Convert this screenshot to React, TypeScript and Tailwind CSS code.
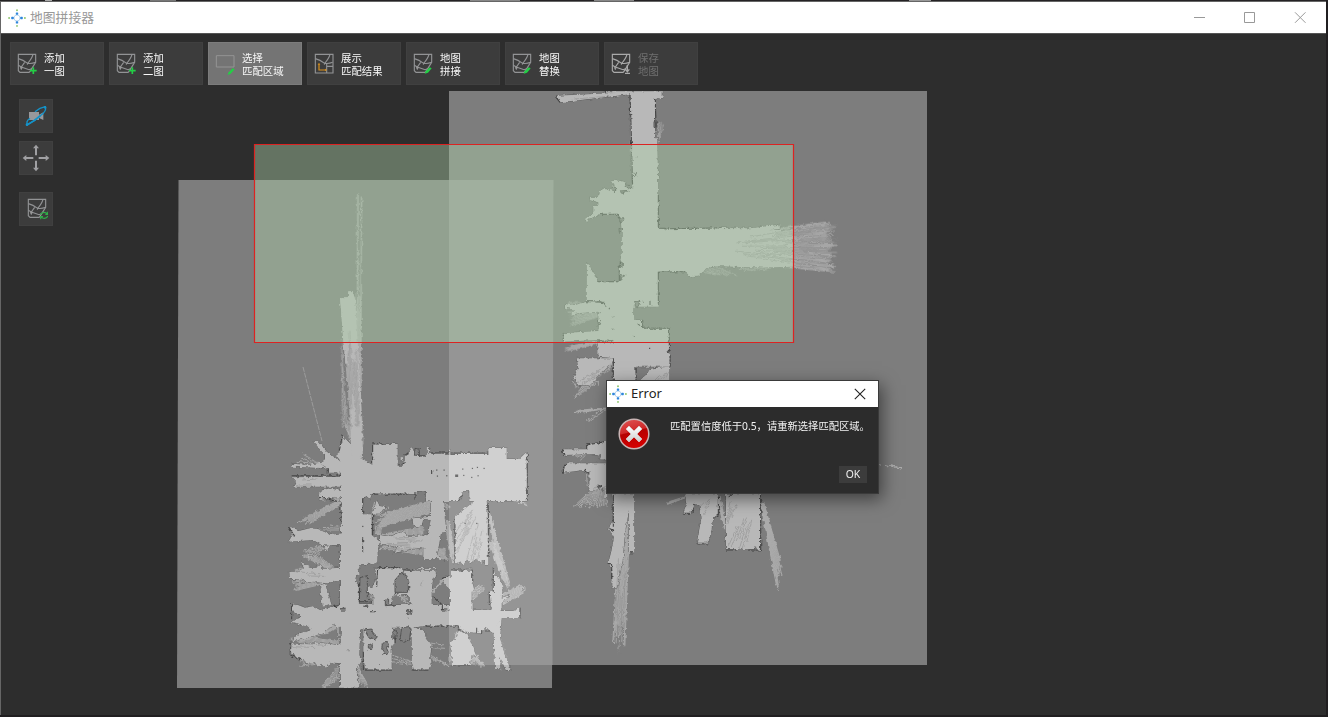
import React from "react";

type Badge = "plus" | "pen" | "save" | "sync" | "axes" | "none";

const uiFont = "font-['Noto_Sans','Noto_Sans_CJK_SC',sans-serif]";

function AppLogo() {
  return (
    <svg className="size-[18px] shrink-0" viewBox="0 0 18 18">
      <circle cx="9" cy="9" r="3" fill="#fff" stroke="#b9d6f0" strokeWidth="1" />
      <g fill="#2f86dc">
        <rect x="7.8" y="3.4" width="2.4" height="2.4" rx=".6" />
        <rect x="7.8" y="12.2" width="2.4" height="2.4" rx=".6" />
        <rect x="3.2" y="7.8" width="2.6" height="2.4" rx=".6" />
        <rect x="12.2" y="7.8" width="2.6" height="2.4" rx=".6" />
      </g>
      <g fill="#8cc56a">
        <circle cx="9" cy="1.2" r=".95" />
        <circle cx="9" cy="16.9" r=".95" />
        <circle cx="1.1" cy="9" r=".95" />
        <circle cx="16.9" cy="9" r=".95" />
      </g>
    </svg>
  );
}

function MapIcon({ badge, disabled }: { badge: Badge; disabled?: boolean }) {
  const full = badge === "axes";
  return (
    <svg className="h-[22px] w-[21px] shrink-0" viewBox="0 0 63 66" fill="none">
      <g stroke={disabled ? "#aaaaaa" : "#929395"} strokeWidth="3.4">
        <path d={full ? "M4 4H57V60H4Z" : "M37 58H9L4 53V4H56V28L37 58"} />
        <path d="M4 17Q18 20 32 31Q44 33 56 28" />
        <path d="M48 4Q45 16 32 31L31 35" />
        {!full && <path d="M4 37L13 42L36 50L44 47M13 42L23 28M13 44V50" />}
        {full && <path d="M38 40H57M38 32V60" />}
      </g>
      {!full && <circle cx="13" cy="44" r="3.5" fill="#999" />}
      {badge === "plus" && <path d="M49 43V63M39 53H59" stroke="#22cf45" strokeWidth="5" />}
      {badge === "pen" && <path d="M35 62L38 54L50 43L56 46L45 59Z" fill="#22cf45" />}
      {badge === "save" && (
        <path d="M49 36V56M43 49L49 56L55 49M42 61H57" stroke="#aaaaaa" strokeWidth="4" />
      )}
      {badge === "sync" && (
        <g stroke="#2fae48" strokeWidth="3.4">
          <path d="M40 50Q47 39 58 45L62 49M62 41V49H55" />
          <path d="M63 54Q55 65 45 59L41 56M41 64V56H48" />
        </g>
      )}
      {full && (
        <>
          <path d="M15 34V51H34" stroke="#d9901c" strokeWidth="3.6" />
          <path d="M11 35L15 29L19 35ZM33 47L39 51L33 55Z" fill="#d9901c" />
        </>
      )}
    </svg>
  );
}

function RegionIcon() {
  return (
    <svg className="h-[22px] w-[21px] shrink-0" viewBox="0 0 63 66" fill="none">
      <path d="M4 8H57V42H4Z" stroke="#949494" strokeWidth="3" />
      <path d="M38 66L41 58L53 46L59 49L47 62Z" fill="#22cf45" />
    </svg>
  );
}

const tools: { lines: [string, string]; badge: Badge; active?: boolean; disabled?: boolean }[] = [
  { lines: ["添加", "一图"], badge: "plus" },
  { lines: ["添加", "二图"], badge: "plus" },
  { lines: ["选择", "匹配区域"], badge: "none", active: true },
  { lines: ["展示", "匹配结果"], badge: "axes" },
  { lines: ["地图", "拼接"], badge: "pen" },
  { lines: ["地图", "替换"], badge: "pen" },
  { lines: ["保存", "地图"], badge: "save", disabled: true },
];

function Toolbar() {
  return (
    <div className="relative flex gap-[5px] pt-2 pl-[9px]">
      {tools.map((t, i) => (
        <button
          key={i}
          className={`flex h-[43px] w-[94px] items-center border pl-[6px] text-left text-[10.4px] leading-[13px] ${
            t.active ? "border-[#7c7c7c] bg-[#747474]" : "border-[#404040] bg-[#3c3c3c]"
          } ${t.disabled ? "text-[#6f6f6f]" : "text-[#f8f8f8]"}`}
        >
          {t.active ? <RegionIcon /> : <MapIcon badge={t.badge} disabled={t.disabled} />}
          <span className="ml-[6px] pt-[3px] whitespace-nowrap">
            {t.lines[0]}
            <br />
            {t.lines[1]}
          </span>
        </button>
      ))}
    </div>
  );
}

function SideTools() {
  const cls = "flex size-[34px] items-center justify-center border border-[#404040] bg-[#3c3c3c]";
  return (
    <div className="relative flex flex-col pt-[14px] pl-[18px]">
      <button className={cls}>
        <svg className="size-[26px]" viewBox="0 0 78 78" fill="none">
          <path d="M18 27H48V35L61 28V51L48 45V51H18Z" fill="#98989b" />
          <path
            d="M36 26Q50 14 67 11Q72 24 52 38Q34 55 12 66V56Q14 50 21 46"
            stroke="#1492c8"
            strokeWidth="4"
          />
          <path d="M52 38Q34 55 12 66" stroke="#1492c8" strokeWidth="5" />
          <circle cx="66" cy="13" r="4" fill="#1492c8" />
          <circle cx="12" cy="65" r="4" fill="#1492c8" />
        </svg>
      </button>
      <button className={`${cls} mt-2`}>
        <svg className="size-[28px]" viewBox="0 0 84 84" fill="none">
          <path d="M42 34V8M42 50V76M34 42H8M50 42H76" stroke="#a0a0a3" strokeWidth="6" />
          <path
            d="M33 13L42 2L51 13ZM33 71L42 82L51 71ZM13 33L2 42L13 51ZM71 33L82 42L71 51Z"
            fill="#a0a0a3"
          />
        </svg>
      </button>
      <button className={`${cls} mt-[17px] pl-[2px]`}>
        <MapIcon badge="sync" />
      </button>
    </div>
  );
}

type Fan = [number, number, number, number, number, number, number, number, number];

/* Rays spreading from segment (a,b)-(c,d) to segment (e,f)-(g,h). */
function fanPath([a, b, c, d, e, f, g, h, n]: Fan): string {
  let out = "";
  for (let i = 0; i < n; i++) {
    const t = n > 1 ? i / (n - 1) : 0.5;
    const r = Math.abs(Math.sin((i + 1) * 12.9898 + e) * 43758.5453) % 1;
    const k = n < 4 ? 1 : 0.78 + 0.22 * r;
    const x0 = a + (c - a) * t;
    const y0 = b + (d - b) * t;
    const x1 = e + (g - e) * t;
    const y1 = f + (h - f) * t;
    out += `M${x0.toFixed(1)} ${y0.toFixed(1)}L${(x0 + (x1 - x0) * k).toFixed(1)} ${(y0 + (y1 - y0) * k).toFixed(1)}`;
  }
  return out;
}

/* Short broken streaks inside the same kind of fan. */
function streakPath([a, b, c, d, e, f, g, h, n]: Fan): string {
  let out = "";
  for (let i = 0; i < n; i++) {
    const t = n > 1 ? i / (n - 1) : 0.5;
    const r = Math.abs(Math.sin((i + 3) * 78.233 + f) * 43758.5453) % 1;
    const x0 = a + (c - a) * t;
    const y0 = b + (d - b) * t;
    const x1 = e + (g - e) * t;
    const y1 = f + (h - f) * t;
    const s = 0.1 + r * 0.45;
    const q = Math.min(1, s + 0.35 + r * 0.3);
    out += `M${(x0 + (x1 - x0) * s).toFixed(1)} ${(y0 + (y1 - y0) * s).toFixed(1)}L${(x0 + (x1 - x0) * q).toFixed(1)} ${(y0 + (y1 - y0) * q).toFixed(1)}`;
  }
  return out;
}

interface Scan {
  x: number;
  y: number;
  free: string[];
  holes?: string[];
  walls?: string;
  rays?: Fan[];
  shade?: Fan[];
}

/* Each scan is stored at three units per map pixel, from its own origin. */
const scans: Scan[] = [
  {
    x: 280,
    y: 420,
    free: [
      "M187 45L200 60L225 92L247 118L278 135V72H353V140H368V122L360 118L372 100L380 108L386 98L396 82L402 95L415 95V108H440V82H447V100H505L510 85L513 102H625V84H680V117H718L738 98H742V130L738 140L742 150V243H620L625 300V410H525V290L560 262L583 243H568V213H545V235L535 243H490L494 290L500 335L483 338L478 370L468 418H430L440 360L452 300L430 296L425 318L410 322L400 315L398 295L453 290V243L438 240V213H410V222H275L270 238L262 230L248 235V283H275V345L300 365L290 400L293 430H183V375H125L100 360L25 365L38 345L30 320L60 332L90 325L120 328L150 345L183 340V200H40L48 185L35 172L183 170V158H145V145L118 130L135 118V95L150 108L183 125L168 105L178 95V80L187 70Z",
      "M98 62L114 62L140 95L183 125L160 120L128 98Z",
      "M35 132L90 134L118 128L140 145L36 140Z",
      "M122 212L150 205L183 212V232L140 236L118 240Z",
      "M275 290L284 262L290 240L296 252L298 258L320 262L306 274Z",
      "M300 345L330 350L372 333L380 348L452 345V380L390 388L340 400L352 382L300 370Z",
      "M128 378L155 375L140 392Z",
    ],
    walls:
      "M35 167H183M183 250V318M248 235V283M275 222H385M120 232L175 245M372 100V130L358 135M385 98L375 106M418 108H440M448 99H625M742 98V243M455 150V162M278 135V72H310M525 290V410M625 250V410M248 355V395M278 285V345M187 45L178 92M25 320L45 350M145 158V145M405 215V240M535 243L548 225",
    holes: ["M405 85L418 88V106H403Z"],
    rays: [
      [183, 238, 183, 252, 45, 308, 78, 318, 9],
      [175, 243, 183, 228, 112, 205, 112, 245, 8],
      [213, 60, 245, 110, 188, 0, 245, 0, 16],
      [118, 130, 130, 135, 60, 98, 36, 136, 4],
      [453, 240, 453, 280, 285, 290, 280, 325, 18],
      [275, 285, 290, 290, 285, 240, 325, 260, 9],
      [430, 320, 430, 405, 295, 345, 300, 385, 26],
      [420, 375, 435, 405, 500, 390, 510, 420, 12],
      [490, 290, 505, 300, 518, 430, 528, 420, 7],
      [626, 270, 634, 300, 650, 440, 698, 520, 10],
      [290, 345, 300, 345, 285, 320, 310, 305, 5],
      [183, 320, 183, 330, 150, 315, 110, 330, 3],
      [125, 375, 140, 380, 65, 395, 90, 420, 6],
      [700, 244, 712, 244, 740, 250, 742, 258, 3],
      [490, 250, 490, 262, 515, 262, 505, 270, 4],
    ],
    shade: [
      [580, 260, 600, 265, 525, 340, 530, 410, 9],
      [595, 290, 618, 300, 560, 420, 590, 430, 6],
      [40, 182, 40, 195, 140, 175, 140, 195, 2],
      [440, 350, 440, 400, 320, 355, 320, 385, 9],
    ],
  },
  {
    x: 280,
    y: 555,
    free: [
      "M180 -12H293V0L290 25L245 28L232 42L240 55L228 62L225 80L238 88V140L278 145V150H510V165H640L665 168H700L720 158L718 190L665 190L650 215L640 235L615 218L600 235L560 230L535 213H435L390 218V255H362V218H335L345 240V265L335 270V345H255L250 290V218L240 225L238 300L245 318L228 345L240 398H180V325L150 322L140 338L125 326L118 335L100 322L75 325L70 312L50 310L42 296L30 300V265L70 268L110 262L175 270V215L160 208L130 235L35 260L50 240L95 225L85 215L62 210L50 205L30 200L60 190V178L35 170L40 145L75 158L98 154L120 165L180 150Z",
      "M28 50L55 52L72 40L62 18L88 38L110 38L118 25L126 42L180 38V75L140 85L100 80L65 85L82 76L40 72L30 72Z",
      "M120 90L136 86L144 118L155 150L128 155Z",
      "M285 38H362L370 48L345 75V112L330 150H280V120L262 110L255 88L278 98L290 70Z",
      "M370 45L395 48L420 38L465 38L468 60L458 80L455 110V150H395L385 120L350 120L362 112L388 112V80Z",
      "M515 45L540 50L575 38V75L582 102L575 110V170H510V105L485 72L500 62L515 70Z",
      "M640 35L646 62L658 68L668 100L665 128L690 120L665 142V170H635L628 110L640 105Z",
      "M395 215L430 225L440 250L455 270L450 305L455 320L445 345H402L395 320Z",
      "M540 215L560 230L575 270L590 306L575 300L570 330H515V285L508 265L530 245Z",
      "M640 225L665 190L660 250L672 290L692 345H677L660 305L660 340H645Z",
      "M430 -20H462L470 0L495 15L465 8H430Z",
      "M525 -12H625V30H615V15H605V28L588 12L570 25L560 12L550 32L540 18L525 28Z",
    ],
    holes: [
      "M252 225L275 222L280 238L292 245L285 254L268 250L262 240Z",
      "M365 218L385 215L392 228L388 255L372 262L360 252Z",
      "M308 262L318 258L326 268L320 280L325 292L312 300L305 280Z",
      "M316 135L326 130L326 145L344 150L316 152Z",
      "M265 270L277 266L275 284L265 282Z",
      "M380 165L396 167L395 178L380 176Z",
      "M340 222L352 232L350 250L338 250Z",
      "M345 75L365 52L385 75V112H345Z",
      "M240 68L262 62V130L278 145H238Z",
    ],
    walls:
      "M295 38H360M370 45H465M485 72L505 60M515 45H575V75M458 125L485 148M435 213H535V225L560 235M180 160H197M250 154H265M180 165L197 165M345 240V265M240 140H278M238 85V140M180 215V265M35 148V190M32 262V300L60 315M640 35V110M720 158V190M270 170H285M605 225V235M615 228H630M250 290V345M255 345H335M395 345H445M180 150L160 157M487 152V165H510M293 38L290 95M628 110V150M590 218V234M203 287H205M298 331H300M383 190H385",
    rays: [
      [175, 40, 175, 76, 28, 40, 40, 108, 22],
      [140, 40, 170, 45, 55, -5, 112, 0, 9],
      [180, 260, 180, 320, 30, 240, 45, 335, 24],
      [165, 205, 175, 218, 32, 255, 48, 268, 10],
      [180, 330, 185, 365, 118, 402, 130, 400, 7],
      [235, 330, 238, 345, 240, 400, 270, 400, 6],
      [390, 255, 395, 275, 490, 270, 495, 280, 2],
      [335, 300, 335, 320, 395, 320, 395, 328, 3],
      [450, 300, 450, 310, 505, 330, 508, 333, 3],
      [455, 120, 458, 105, 490, 65, 495, 75, 6],
      [575, 110, 575, 135, 603, 85, 622, 96, 7],
      [665, 118, 668, 150, 725, 88, 745, 105, 12],
      [626, -40, 640, -40, 682, 105, 692, 102, 8],
      [560, 240, 575, 280, 570, 330, 622, 348, 12],
      [530, 230, 550, 235, 502, 330, 560, 335, 14],
      [645, 230, 660, 250, 645, 345, 692, 348, 9],
      [400, 230, 430, 235, 402, 348, 452, 348, 14],
      [290, 150, 320, 150, 255, 90, 350, 115, 9],
      [375, 110, 390, 150, 335, 115, 350, 118, 6],
    ],
    shade: [
      [180, 275, 180, 280, 30, 262, 30, 275, 2],
      [160, 60, 160, 65, 50, 50, 50, 62, 2],
      [330, 145, 335, 140, 340, 115, 350, 120, 2],
      [425, 70, 430, 72, 422, 95, 424, 98, 2],
    ],
  },
  {
    x: 550,
    y: 85,
    free: [
      "M163 19H338V38L316 42L318 110L322 170L325 330V430L345 432L510 429L600 430L688 419L690 431L660 436L730 432V545L640 548L480 543L460 560L445 572L418 573L405 558L325 560V665H250V705H278V730H358V795L352 800L360 812V845H258V895H190V820L145 815V770L190 768L145 765L40 770V745L100 740L145 738V690L150 680L145 660L165 650H110L110 530L145 590H208L215 575L208 565V530L215 510V440L212 400L205 388H150L118 402L108 408L110 397L130 388V362H145V352L120 346V335H145L150 318L165 308L175 318L195 300L180 290L200 285L225 292L248 310L242 205L240 25L165 23Z",
      "M20 32L240 22V28L30 52Z",
      "M45 657L75 660L110 650L165 655L150 680L90 684L60 690L75 675L45 668Z",
      "M80 820H190L188 830L140 880L120 900H80V880L65 888L85 850Z",
      "M265 890L290 868L300 852L322 848L358 845V890Z",
    ],
    holes: [
      "M185 312L194 304L200 314L192 320Z",
      "M210 318L235 316L215 325Z",
      "M230 298L245 308L235 310L226 302Z",
      "M207 398L222 403L212 415Z",
      "M207 430L218 434L208 442Z",
      "M208 530L222 540L210 548Z",
      "M208 568L224 572L212 584Z",
      "M312 110L320 112V126L312 124Z",
      "M255 650L270 648L262 668L255 662Z",
      "M145 708L152 712L145 725Z",
    ],
    walls:
      "M163 23V17M20 32L22 42L30 52M316 42L318 160M240 25L243 120L248 310M325 330V430M325 560V665M325 430L345 430L350 434L358 431L510 429M208 530V590H145M150 388H205V400M110 650H155L163 655L168 665M178 668V673M185 695H190M185 732H190M145 770H190M190 820V895M258 845V895M358 730V795L352 800L360 812V845M325 562L405 560M40 745V770M278 705V730H358M260 215H263M257 265V275M250 265H253M263 716L270 722M282 650V654M300 650V660M253 755V758M253 807V810M299 788V792",
    rays: [
      [690, 430, 690, 545, 864, 406, 866, 562, 56],
      [415, 550, 470, 535, 500, 570, 570, 575, 5],
      [520, 530, 600, 535, 600, 560, 665, 560, 6],
      [322, 175, 326, 165, 326, 110, 340, 118, 3],
      [145, 655, 145, 695, 42, 652, 62, 722, 15],
      [145, 770, 145, 775, 40, 785, 40, 802, 8],
      [180, 825, 190, 840, 62, 905, 95, 915, 15],
      [345, 850, 358, 870, 290, 895, 340, 900, 10],
    ],
    shade: [
      [520, 470, 520, 500, 864, 410, 864, 560, 22],
      [700, 435, 700, 540, 864, 415, 864, 555, 18],
      [180, 830, 188, 840, 80, 895, 110, 910, 7],
      [350, 850, 358, 855, 300, 900, 340, 900, 5],
      [240, 28, 238, 30, 35, 42, 35, 48, 1],
    ],
  },
  {
    x: 550,
    y: 380,
    free: [
      "M40 208H110V195L165 185H172V240L150 238L154 225L140 222L40 225Z",
      "M50 250H172V350L160 355L160 320L148 326L118 335V280L100 270L40 278Z",
      "M187 340H253V518H237V390L225 460L218 540L200 625H187V570L175 550L185 510L192 470L175 445L190 420Z",
      "M405 345L420 340H505V400L490 410L485 445L475 492H440L455 410L448 375L435 372L425 400H400L410 375Z",
      "M528 340H632V510H620L618 498L610 508H528Z",
    ],
    holes: ["M143 315L153 318L146 326Z", "M536 340H548L538 352Z"],
    walls:
      "M38 208V215L42 225M40 278V260L50 250M110 208V195L165 185M190 345V440M177 445L192 452M173 550L185 552V600M237 518H250M632 345V510H595M528 510H560M440 490H475M505 350V405L490 412M400 400H425L435 372M118 280L100 270",
    rays: [
      [170, 84, 170, 86, 70, 92, 72, 100, 5],
      [160, 85, 170, 88, 112, 122, 115, 124, 2],
      [110, 0, 145, 0, 68, 60, 98, 40, 6],
      [65, 0, 145, 0, 80, 22, 145, 18, 9],
      [130, 325, 165, 335, 65, 385, 172, 385, 18],
      [110, 285, 165, 285, 112, 325, 160, 345, 6],
      [110, 208, 120, 212, 75, 230, 90, 242, 4],
      [212, 350, 242, 350, 187, 815, 224, 812, 16],
      [420, 345, 430, 345, 342, 370, 347, 375, 6],
      [500, 350, 510, 350, 522, 440, 548, 530, 8],
      [632, 370, 642, 370, 684, 640, 702, 580, 14],
      [1005, 254, 1005, 256, 1056, 264, 1056, 264, 3],
      [985, 253, 985, 253, 994, 255, 994, 255, 1],
    ],
    shade: [
      [590, 370, 615, 375, 535, 500, 585, 510, 7],
      [545, 350, 570, 350, 528, 410, 535, 440, 5],
      [480, 350, 495, 350, 440, 390, 455, 410, 4],
      [210, 450, 232, 450, 190, 820, 215, 820, 5],
      [160, 290, 165, 290, 110, 360, 160, 375, 4],
    ],
  },
  {
    x: 280,
    y: 180,
    free: ["M180 352H203L205 334H218L225 360L232 480L242 640L248 830H215L205 640L190 480Z"],
    rays: [
      [230, 580, 235, 580, 233, 40, 235, 40, 2],
      [240, 640, 243, 640, 244, 50, 245, 50, 2],
      [185, 480, 192, 640, 188, 770, 215, 810, 5],
      [205, 350, 225, 350, 225, 830, 252, 850, 12],
      [230, 560, 244, 600, 232, 330, 242, 350, 6],
    ],
    shade: [
      [188, 360, 205, 360, 200, 740, 225, 810, 6],
      [207, 345, 222, 370, 228, 740, 240, 740, 4],
      [190, 490, 190, 500, 190, 720, 192, 740, 2],
    ],
  },
];

const place = (s: Scan) => `translate(${s.x} ${s.y}) scale(.33333)`;

const lobbyDots: [number, number][] = [
  [470, 150], [492, 150], [472, 168], [500, 167], [527, 165], [548, 147], [551, 166],
  [577, 145], [592, 142], [612, 145], [594, 167], [575, 172], [555, 310], [590, 310], [248, 319],
];

function ScanLayers() {
  return (
    <g filter="url(#scanNoise)">
      {scans.map((s, i) => (
        <g key={i} transform={place(s)} fill="none" stroke="#b8b8b8" strokeWidth="2.8" opacity=".8">
          {s.rays?.map((f, j) => <path key={j} d={fanPath(f)} />)}
        </g>
      ))}
      {scans.map((s, i) => (
        <g key={i} transform={place(s)} fill="#b8b8b8" stroke="#5e5e5e" strokeWidth={s.walls ? 3 : 0}>
          {s.free.map((d, j) => <path key={j} d={d} />)}
        </g>
      ))}
      {scans.map((s, i) => (
        <g key={i} transform={place(s)} fill="#b8b8b8">
          {s.free.map((d, j) => <path key={j} d={d} />)}
        </g>
      ))}
      {scans.map((s, i) => (
        <g key={i} transform={place(s)}>
          {s.shade?.map((f, j) => (
            <path key={j} d={streakPath(f)} fill="none" stroke="#858585" strokeWidth="2.2" opacity=".65" />
          ))}
          {s.holes?.map((d, j) => (
            <path key={j} d={d} fill="#808080" stroke="#4c4c4c" strokeWidth="2.6" />
          ))}
          {s.walls && (
            <path d={s.walls} fill="none" stroke="#444" strokeWidth="3.2" strokeDasharray="24 2 9 1" />
          )}
        </g>
      ))}
    </g>
  );
}

function MapCanvas() {
  return (
    <svg className="absolute inset-0 isolate h-full w-full" viewBox="1 34 1325 681" preserveAspectRatio="none">
      <defs>
        <filter id="scanNoise" filterUnits="userSpaceOnUse" x="170" y="85" width="770" height="610" colorInterpolationFilters="sRGB">
          <feTurbulence type="fractalNoise" baseFrequency=".28" numOctaves="2" seed="4" />
          <feDisplacementMap in="SourceGraphic" scale="4" xChannelSelector="R" yChannelSelector="G" />
        </filter>
        <clipPath id="mapBounds">
          <path d="M449 91H927V665H552V688H177L178.500 180H449Z" />
        </clipPath>
      </defs>
      <path d="M449 91H927V665H449Z" fill="#7d7d7d" />
      <path d="M178.500 180H554L552 688H177Z" fill="#7d7d7d" />
      <g clipPath="url(#mapBounds)">
        <ScanLayers />
        <path d="M303 367L322 441" stroke="#9c9c9c" strokeWidth="1" strokeDasharray="5 1" />
      </g>
      {lobbyDots.map(([x, y], i) => (
        <rect
          key={i}
          x={279.5 + x / 3}
          y={419.5 + y / 3}
          width={i === 4 ? 3 : 1.2}
          height={i === 4 ? 2.5 : 1.2}
          fill="#555"
        />
      ))}
      <path className="mix-blend-plus-lighter" d="M449 180H553.500L552.500 665H449Z" fill="#181818" />
      <path d="M254.500 144.500H793.500V342.500H254.500Z" fill="rgb(174,209,170)" fillOpacity=".425" />
      <path d="M254.500 144.500H793.500V342.500H254.500Z" fill="none" stroke="#dc2322" strokeWidth="1.200" />
    </svg>
  );
}

function ErrorDialog() {
  return (
    <div className="absolute top-[346px] left-[605px] flex h-[114px] w-[273px] flex-col border border-[#3a3a3a] bg-[#2c2c2c] shadow-[3px_5px_16px_rgba(0,0,0,0.5)]">
      <div className="flex h-[26px] shrink-0 items-center bg-white pl-[2px]">
        <AppLogo />
        <span className="ml-[4px] text-[13px] text-[#222]">Error</span>
        <svg className="mr-[12px] ml-auto size-[12px]" viewBox="0 0 12 12">
          <path d="M.8 .8L11.2 11.2M11.2 .8L.8 11.2" stroke="#222" strokeWidth="1.1" />
        </svg>
      </div>
      <div className="flex pt-[11px] pl-[11px]">
        <svg className="size-8 shrink-0" viewBox="0 0 32 32">
          <defs>
            <linearGradient id="errorFill" x1="0" y1="0" x2=".25" y2="1">
              <stop offset="0" stopColor="#e05555" />
              <stop offset=".48" stopColor="#cf2828" />
              <stop offset=".52" stopColor="#b50000" />
              <stop offset="1" stopColor="#d40000" />
            </linearGradient>
            <linearGradient id="errorCross" x1="0" y1="0" x2="0" y2="1">
              <stop offset="0" stopColor="#fff" />
              <stop offset="1" stopColor="#ccc" />
            </linearGradient>
          </defs>
          <circle cx="16" cy="16" r="14.800" fill="url(#errorFill)" stroke="#c9b4b4" strokeWidth="1.500" />
          <path
            d="M11 8L16 13L21 8L24 11L19 16L24 21L21 24L16 19L11 24L8 21L13 16L8 11Z"
            fill="url(#errorCross)"
            stroke="#ddd"
            strokeWidth=".6"
            strokeLinejoin="round"
          />
        </svg>
        <p className="ml-[20px] text-[10.3px] leading-4 whitespace-nowrap text-[#f2f2f2]">
          匹配置信度低于0.5，请重新选择匹配区域。
        </p>
      </div>
      <button className="mt-auto mr-[11px] mb-[10px] h-[17px] w-[28px] self-end bg-[#3c3c3c] text-[10.4px] leading-[17px] text-[#f0f0f0]">
        OK
      </button>
    </div>
  );
}

export default function App() {
  return (
    <div className={`flex h-[717px] w-[1328px] flex-col overflow-hidden bg-[#201e20] pr-[2px] pb-[2px] ${uiFont}`}>
      <div className="flex h-px shrink-0 bg-[#242224]">
        <i className="ml-[45px] w-[7px] bg-[#aaa]" />
        <i className="ml-[98px] w-[26px] bg-[#777]" />
        <i className="ml-[294px] w-[50px] bg-[#888]" />
        <i className="ml-[74px] w-[40px] bg-[#888]" />
        <i className="ml-[275px] w-[22px] bg-[#999]" />
      </div>
      <div className="flex min-h-0 flex-1 flex-col border-t border-l border-[#666]">
        <header className="flex h-[31px] shrink-0 items-center bg-white pl-[7px]">
          <AppLogo />
          <h1 className="ml-1 text-[12.8px] text-[#999]">地图拼接器</h1>
          <svg className="mr-[20px] ml-auto h-[12px] w-[112px]" viewBox="0 0 112 12" fill="none" stroke="#999" strokeWidth="1">
            <path d="M0 5.500H11M50.500 .5H60.500V10.500H50.500ZM101 .3L111.500 10.800M111.500 .3L101 10.800" />
          </svg>
        </header>
        <main className="relative flex min-h-0 flex-1 flex-col border-t border-[#555] bg-[#2d2d2d]">
          <MapCanvas />
          <Toolbar />
          <SideTools />
          <ErrorDialog />
        </main>
      </div>
    </div>
  );
}
